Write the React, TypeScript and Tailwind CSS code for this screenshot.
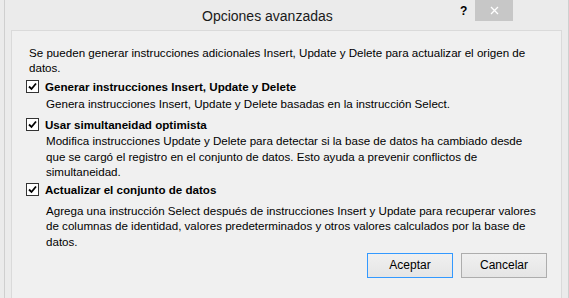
import React from 'react';

function CheckBox() {
  return (
    <span className="w-[13px] h-[13px] border border-[#333333] bg-white flex items-center justify-center shrink-0">
      <svg width="9" height="9" viewBox="0 0 9 9">
        <path d="M1 4.5 L3.5 7 L8 1.5" fill="none" stroke="#000" strokeWidth="1.8" />
      </svg>
    </span>
  );
}

function Option({ label }: { label: string }) {
  return (
    <div className="flex items-center h-[16px] ml-[-3px] gap-[6px]">
      <CheckBox />
      <span className="font-bold">{label}</span>
    </div>
  );
}

export default function App() {
  return (
    <div className="w-[569px] h-[298px] bg-[#ebebeb] pl-[4px] font-['Liberation_Sans',sans-serif] text-black overflow-hidden">
      <div className="h-full border-l border-r border-[#cfcfcf] flex flex-col">
        {/* Title bar */}
        <div className="h-[30px] relative shrink-0">
          <div className="absolute left-[197px] top-[7px] text-[14px] leading-[18px] text-[#1a1a1a]">
            Opciones avanzadas
          </div>
          <div className="absolute left-[455px] top-[3px] text-[12px] font-bold leading-[16px]">?</div>
          <div className="absolute left-[470px] top-0 w-[38px] h-[21px] bg-[#c7c7c7] flex items-center justify-center">
            <svg width="9" height="9" viewBox="0 0 9 9">
              <path d="M1 1 L8 8 M8 1 L1 8" stroke="#fff" strokeWidth="1.3" />
            </svg>
          </div>
        </div>

        {/* Client area */}
        <div className="flex-1 mx-[6px] border-t border-l border-r border-[#dadada] bg-[#f0f0f0] pt-[14px] pl-[17px] pr-[14px] text-[11.6px] leading-[15px] whitespace-nowrap flex flex-col">
          <p>
            Se pueden generar instrucciones adicionales Insert, Update y Delete para actualizar el origen de
            <br />
            datos.
          </p>

          <div className="mt-[3px]">
            <Option label="Generar instrucciones Insert, Update y Delete" />
          </div>
          <p className="mt-[2px] pl-[17px]">
            Genera instrucciones Insert, Update y Delete basadas en la instrucción Select.
          </p>

          <div className="mt-[5px]">
            <Option label="Usar simultaneidad optimista" />
          </div>
          <p className="mt-[1px] pl-[17px] leading-[15.5px]">
            Modifica instrucciones Update y Delete para detectar si la base de datos ha cambiado desde
            <br />
            que se cargó el registro en el conjunto de datos. Esto ayuda a prevenir conflictos de
            <br />
            simultaneidad.
          </p>

          <div className="mt-[2px]">
            <Option label="Actualizar el conjunto de datos" />
          </div>
          <p className="mt-[5px] pl-[17px] leading-[15.5px]">
            Agrega una instrucción Select después de instrucciones Insert y Update para recuperar valores
            <br />
            de columnas de identidad, valores predeterminados y otros valores calculados por la base de
            <br />
            datos.
          </p>

          <div className="mt-[4px] flex justify-end gap-[8px]">
            <button className="w-[86px] h-[25px] border border-[#3399ff] bg-gradient-to-b from-[#f0f0f0] to-[#e5e5e5] text-[12px]">
              Aceptar
            </button>
            <button className="w-[86px] h-[25px] border border-[#adadad] bg-gradient-to-b from-[#f0f0f0] to-[#e5e5e5] text-[12px]">
              Cancelar
            </button>
          </div>
        </div>
      </div>
    </div>
  );
}
